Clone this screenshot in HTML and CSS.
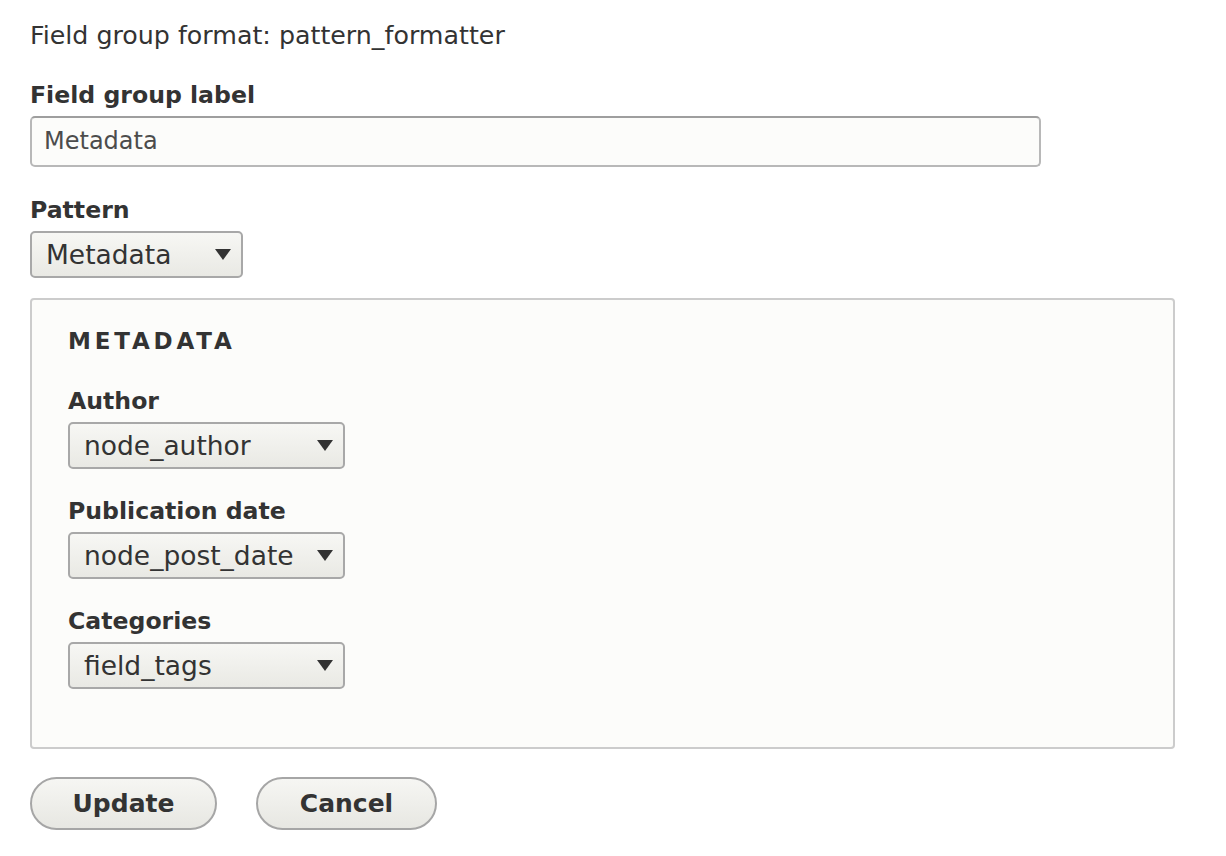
FILE: index.html
```html
<!DOCTYPE html>
<html>
<head>
<meta charset="utf-8">
<link rel="stylesheet" href="styles.css">
</head>
<body>
<div class="page">
  <p class="intro">Field group format: pattern_formatter</p>

  <div class="form-item">
    <label class="label">Field group label</label>
    <div class="text-input">Metadata</div>
  </div>

  <div class="form-item">
    <label class="label">Pattern</label>
    <div class="select select-pattern"><span>Metadata</span><span class="arrow"></span></div>
  </div>

  <div class="fieldset">
    <div class="legend">METADATA</div>
    <div class="form-item inner">
      <label class="label">Author</label>
      <div class="select select-field"><span>node_author</span><span class="arrow"></span></div>
    </div>
    <div class="form-item inner">
      <label class="label">Publication date</label>
      <div class="select select-field"><span>node_post_date</span><span class="arrow"></span></div>
    </div>
    <div class="form-item inner">
      <label class="label">Categories</label>
      <div class="select select-field"><span>field_tags</span><span class="arrow"></span></div>
    </div>
  </div>

  <div class="actions">
    <button class="button btn-update">Update</button>
    <button class="button btn-cancel">Cancel</button>
  </div>
</div>
</body>
</html>
```

FILE: styles.css
```css
html, body {
  margin: 0;
  padding: 0;
  background: #ffffff;
}
body {
  font-family: "DejaVu Sans", "Liberation Sans", sans-serif;
  color: #333333;
}
.page {
  padding: 20px 0 0 30px;
}
.intro {
  margin: 0;
  font-size: 25.3px;
  line-height: 32px;
  color: #333;
}
.form-item {
  margin-top: 28px;
}
.label {
  display: block;
  font-weight: bold;
  font-size: 23.6px;
  line-height: 30px;
  color: #333;
}
.text-input {
  box-sizing: border-box;
  margin-top: 6px;
  width: 1011px;
  height: 51px;
  border: 2px solid #b8b8b8;
  border-top-color: #9e9e9e;
  border-radius: 5px;
  background: #fcfcfa;
  font-size: 24px;
  line-height: 47px;
  padding-left: 12px;
  color: #4c4c4c;
}
.select {
  box-sizing: border-box;
  margin-top: 6px;
  height: 47px;
  border: 2px solid #a8a8a8;
  border-radius: 5px;
  background: linear-gradient(#f7f7f4, #e9e9e4);
  font-size: 26.5px;
  line-height: 43px;
  padding-left: 14px;
  padding-right: 10px;
  display: flex;
  justify-content: space-between;
  align-items: center;
  color: #333;
}
.select-pattern {
  width: 213px;
}
.select-field {
  width: 277px;
}
.arrow {
  flex: none;
  width: 0;
  height: 0;
  border-left: 8px solid transparent;
  border-right: 8px solid transparent;
  border-top: 11px solid #333;
}
.fieldset {
  box-sizing: border-box;
  margin-top: 20px;
  width: 1145px;
  height: 451px;
  border: 2px solid #cccccc;
  border-radius: 4px;
  background: #fcfcfa;
  padding: 26px 36px;
}
.legend {
  font-weight: bold;
  font-size: 23px;
  line-height: 30px;
  letter-spacing: 3.8px;
  color: #333;
}
.form-item.inner {
  margin-top: 30px;
}
.form-item.inner + .form-item.inner {
  margin-top: 27px;
}
.actions {
  margin-top: 28px;
  display: flex;
  gap: 39px;
}
.button {
  box-sizing: border-box;
  height: 53px;
  border: 2px solid #a6a6a6;
  border-radius: 27px;
  background: linear-gradient(#f6f6f3, #e7e7e2);
  font-family: "DejaVu Sans", "Liberation Sans", sans-serif;
  font-weight: bold;
  font-size: 25px;
  color: #333;
  padding: 0;
}
.btn-update {
  width: 187px;
}
.btn-cancel {
  width: 181px;
}
```
